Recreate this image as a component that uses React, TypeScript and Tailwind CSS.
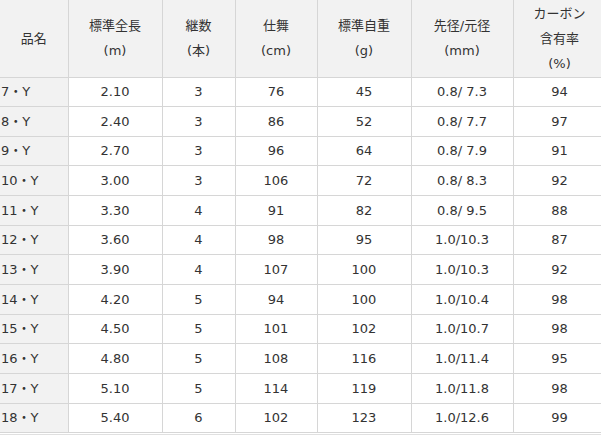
import React from "react";

const ROWS: [string, string, string, string, string, string, string][] = [
  ["7・Y", "2.10", "3", "76", "45", "0.8/ 7.3", "94"],
  ["8・Y", "2.40", "3", "86", "52", "0.8/ 7.7", "97"],
  ["9・Y", "2.70", "3", "96", "64", "0.8/ 7.9", "91"],
  ["10・Y", "3.00", "3", "106", "72", "0.8/ 8.3", "92"],
  ["11・Y", "3.30", "4", "91", "82", "0.8/ 9.5", "88"],
  ["12・Y", "3.60", "4", "98", "95", "1.0/10.3", "87"],
  ["13・Y", "3.90", "4", "107", "100", "1.0/10.3", "92"],
  ["14・Y", "4.20", "5", "94", "100", "1.0/10.4", "98"],
  ["15・Y", "4.50", "5", "101", "102", "1.0/10.7", "98"],
  ["16・Y", "4.80", "5", "108", "116", "1.0/11.4", "95"],
  ["17・Y", "5.10", "5", "114", "119", "1.0/11.8", "98"],
  ["18・Y", "5.40", "6", "102", "123", "1.0/12.6", "99"],
];

const HEADERS: string[][] = [
  ["品名"],
  ["標準全長", "(m)"],
  ["継数", "(本)"],
  ["仕舞", "(cm)"],
  ["標準自重", "(g)"],
  ["先径/元径", "(mm)"],
  ["カーボン", "含有率", "(%)"],
];

const WIDTHS = [68, 94, 73, 82, 94, 102, 93];

export default function App() {
  return (
    <div
      className="w-[601px] h-[436px] overflow-hidden bg-white text-[#333] text-[13px]"
      style={{ fontFamily: '"DejaVu Sans", "Noto Sans CJK JP", sans-serif' }}
    >
      <table className="w-[606px] table-fixed border-collapse">
        <colgroup>
          {WIDTHS.map((w, i) => (
            <col key={i} style={{ width: w }} />
          ))}
        </colgroup>
        <thead>
          <tr className="h-[77px] bg-[#f2f2f2]">
            {HEADERS.map((lines, i) => (
              <th
                key={i}
                className={`font-normal leading-[25px] text-center align-middle border border-[#d6d6d6] border-t-0 ${
                  i === 0 ? "border-l-0" : ""
                }`}
              >
                {lines.map((l, j) => (
                  <div key={j}>{l}</div>
                ))}
              </th>
            ))}
          </tr>
        </thead>
        <tbody>
          {ROWS.map((row) => (
            <tr key={row[0]} className="h-[29.67px]">
              {row.map((cell, i) => (
                <td
                  key={i}
                  className={
                    i === 0
                      ? "bg-[#f2f2f2] border border-l-0 border-[#d6d6d6] pl-[1px] text-left whitespace-nowrap"
                      : "border border-[#d6d6d6] text-center whitespace-nowrap"
                  }
                >
                  {cell}
                </td>
              ))}
            </tr>
          ))}
        </tbody>
      </table>
      <div className="mt-[1px] w-[601px] border-t border-[#e0e0e0]" />
    </div>
  );
}
